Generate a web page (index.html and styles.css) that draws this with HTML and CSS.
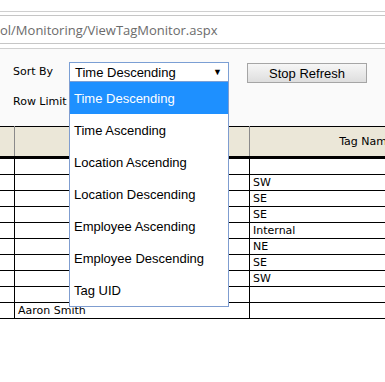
FILE: index.html
```html
<!DOCTYPE html>
<html lang="en">
<head>
    <meta charset="UTF-8">
    <title>View Tag Monitor</title>
    <link rel="stylesheet" href="styles.css">
</head>
<body>
    <!-- Adressleiste -->
    <div class="chrome">
        <div class="toolbar">
            <div class="address">ol/Monitoring/ViewTagMonitor.aspx</div>
        </div>
    </div>

    <div class="form">
        <div class="form-row">
            <span class="label">Sort By</span>
            <div class="select-wrap">
                <div class="select">
                    <span>Time Descending</span>
                    <span class="arrow">&#9660;</span>
                </div>
                <ul class="options">
                    <li class="selected">Time Descending</li>
                    <li>Time Ascending</li>
                    <li>Location Ascending</li>
                    <li>Location Descending</li>
                    <li>Employee Ascending</li>
                    <li>Employee Descending</li>
                    <li>Tag UID</li>
                </ul>
            </div>
            <button class="refresh">Stop Refresh</button>
        </div>
        <div class="form-row second">
            <span class="label">Row Limit</span>
        </div>
    </div>

    <table class="grid">
        <colgroup>
            <col class="c1">
            <col class="c2">
            <col class="c3">
        </colgroup>
        <thead>
            <tr>
                <th></th>
                <th></th>
                <th>Tag Name</th>
            </tr>
        </thead>
        <tbody>
            <tr><td></td><td></td><td></td></tr>
            <tr><td></td><td></td><td>SW</td></tr>
            <tr><td></td><td></td><td>SE</td></tr>
            <tr><td></td><td></td><td>SE</td></tr>
            <tr><td></td><td></td><td>Internal</td></tr>
            <tr><td></td><td></td><td>NE</td></tr>
            <tr><td></td><td></td><td>SE</td></tr>
            <tr><td></td><td></td><td>SW</td></tr>
            <tr><td></td><td></td><td></td></tr>
            <tr><td></td><td>Aaron Smith</td><td></td></tr>
        </tbody>
    </table>
</body>
</html>
```

FILE: styles.css
```css
body {
    margin: 0;
    background-color: #ffffff;
    overflow: hidden;
    font-family: "DejaVu Sans", Verdana, sans-serif;
}

/* Browser-Leiste oben */
.chrome {
    padding-top: 11px;
    background-color: #ffffff;
}
.toolbar {
    border-top: 1px solid #cfcfcf;
    border-bottom: 1px solid #cfcfcf;
    padding: 3px 0 4px 0;
}
.address {
    height: 27px;
    line-height: 28px;
    border-top: 1px solid #c6c6c6;
    border-bottom: 1px solid #c6c6c6;
    font-family: "Open Sans", "Noto Sans", sans-serif;
    font-size: 13px;
    color: #6b6b6b;
    white-space: nowrap;
}

/* Formular */
.form {
    background-color: #fafafa;
    height: 77px;
    box-sizing: border-box;
    padding: 13px 0 0 13px;
}
.form-row {
    display: flex;
    align-items: flex-start;
}
.form-row.second {
    margin-top: 12px;
}
.label {
    width: 56px;
    font-size: 11px;
    line-height: 13px;
    color: #000;
}
.form-row:first-child .label {
    margin-top: 3px;
}
.select-wrap {
    position: relative;
    width: 160px;
}
.select {
    height: 20px;
    box-sizing: border-box;
    border: 1px solid #7b9fd4;
    background-color: #fff;
    display: flex;
    align-items: center;
    justify-content: space-between;
    padding: 0 6px 0 5px;
    font-family: "Liberation Sans", Arial, sans-serif;
    font-size: 13px;
}
.arrow {
    font-size: 9px;
}
.options {
    position: absolute;
    top: 20px;
    left: 0;
    width: 160px;
    box-sizing: border-box;
    margin: 0;
    padding: 0;
    list-style: none;
    background-color: #fff;
    border: 1px solid #7f9dd0;
    border-top: none;
    z-index: 5;
}
.options li {
    height: 32px;
    line-height: 33px;
    padding-left: 4px;
    font-family: "Liberation Sans", Arial, sans-serif;
    font-size: 13px;
    color: #000;
}
.options li.selected {
    background-color: #1e90ff;
    color: #fff;
}
.refresh {
    margin: 1px 0 0 18px;
    width: 120px;
    height: 20px;
    padding: 0;
    border: 1px solid #a5a5a5;
    border-radius: 0;
    background: linear-gradient(#f6f6f6, #dedede);
    font-family: "Liberation Sans", Arial, sans-serif;
    font-size: 13px;
    color: #000;
}

/* Tabelle */
.grid {
    border-collapse: collapse;
    table-layout: fixed;
    width: 484px;
    margin-left: -1px;
    font-size: 11px;
}
.c1 { width: 15px; }
.c2 { width: 235px; }
.c3 { width: 234px; }
.grid th {
    height: 29px;
    padding: 0;
    background-color: #ebe7d8;
    border-top: 1px solid #000;
    border-bottom: 3px solid #000;
    border-left: 1px solid #8a8a8a;
    border-right: 1px solid #8a8a8a;
    font-weight: normal;
    text-align: center;
}
.grid td {
    height: 15px;
    padding: 0 3px;
    line-height: 15px;
    border: 1px solid #000;
    white-space: nowrap;
}
```
